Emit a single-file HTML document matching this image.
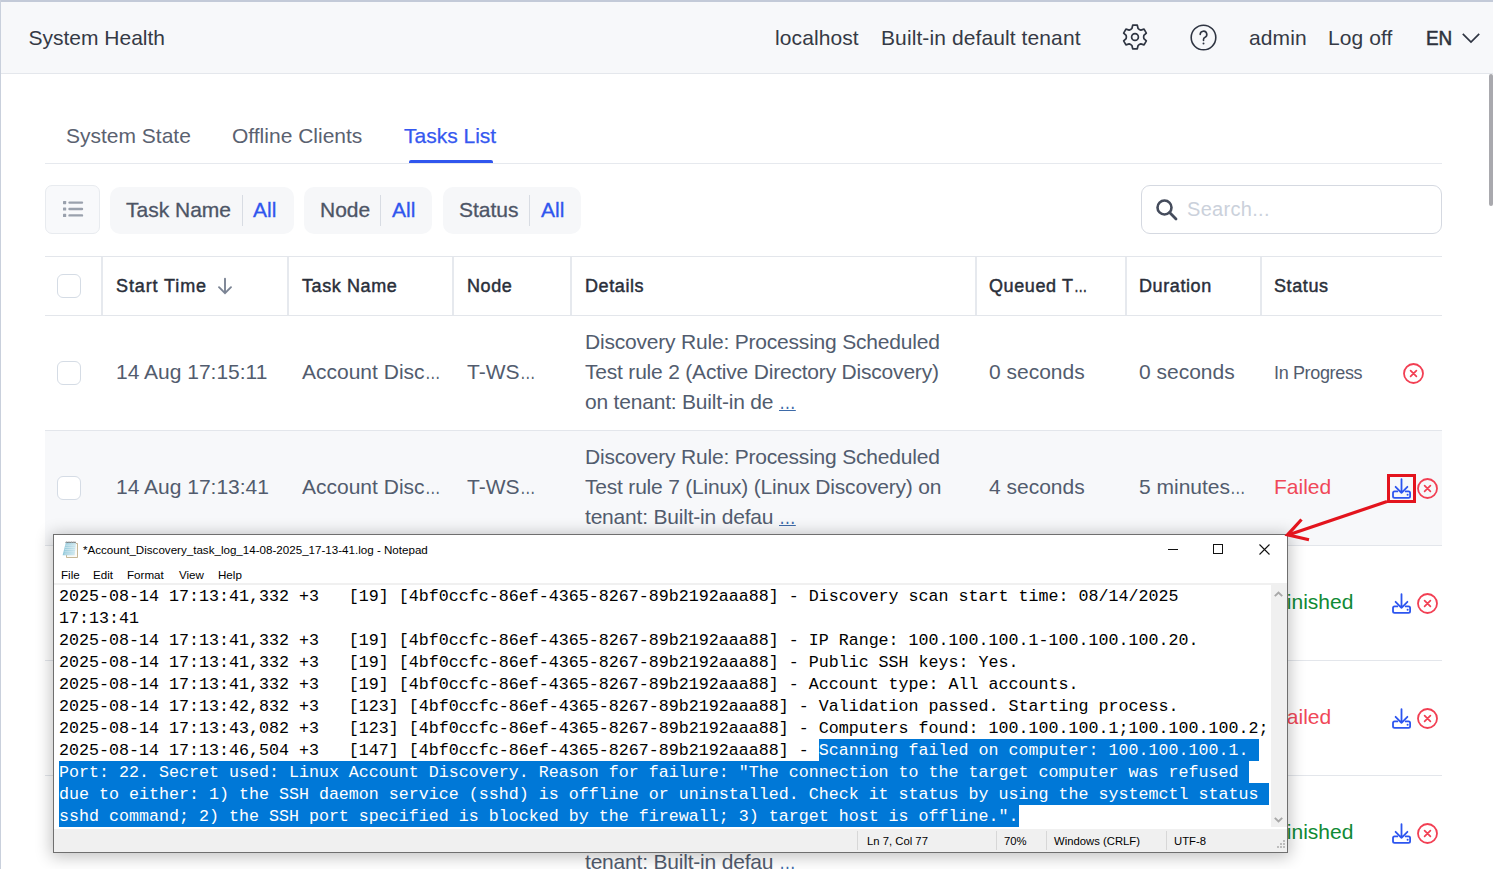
<!DOCTYPE html>
<html><head><meta charset="utf-8"><style>
*{box-sizing:border-box;margin:0;padding:0}
html,body{width:1493px;height:869px;overflow:hidden;background:#fff;font-family:"Liberation Sans",sans-serif;color:#2f3542}
.abs{position:absolute;white-space:nowrap}
#topline{position:absolute;left:0;top:0;width:1493px;height:2px;background:#c3cad8}
#leftline{position:absolute;left:0;top:0;width:1px;height:869px;background:#c9d0dc}
#header{position:absolute;left:1px;top:2px;width:1492px;height:72px;background:#f7f8fa;border-bottom:1px solid #e4e7ec}
.hd{font-size:21px;color:#353a45;letter-spacing:0.1px}
.tab{font-size:21px;color:#5a6170;letter-spacing:0}
.chip{position:absolute;top:187px;height:47px;background:#f6f7f9;border-radius:10px}
.chip .l{position:absolute;top:11px;font-size:21px;color:#4d5566;-webkit-text-stroke:0.3px #4d5566;letter-spacing:0;white-space:nowrap}
.chip .a{position:absolute;top:11px;font-size:21px;color:#3056ee;-webkit-text-stroke:0.3px #3056ee;letter-spacing:0}
.chip .s{position:absolute;top:8px;width:1px;height:31px;background:#d8dce3}
.th{position:absolute;top:276px;font-size:18px;color:#2a2f3a;letter-spacing:0.6px;-webkit-text-stroke:0.45px #2a2f3a;white-space:nowrap}
.vsep{position:absolute;top:257px;width:2px;height:58px;background:#e6e9ee}
.hline{position:absolute;left:45px;width:1397px;height:1px;background:#e3e6eb}
.cb{position:absolute;left:57px;width:24px;height:24px;border:1px solid #d5dce5;border-radius:6px;background:#fff}
.td{position:absolute;font-size:21px;color:#525c6e;letter-spacing:0;white-space:nowrap}
.det{position:absolute;left:585px;font-size:21px;color:#525c6e;line-height:30px;white-space:nowrap;letter-spacing:-0.2px}
.det u{color:#3d6aa8;letter-spacing:0}
.lk{text-decoration-thickness:1.3px;text-underline-offset:1px;display:inline-block;transform:scaleX(0.8);transform-origin:0 0}
.dl,.cx,.ic{position:absolute}
.el{display:inline-block;transform:scaleX(0.74);transform-origin:0 0;letter-spacing:0}
.inprog{font-size:18px;letter-spacing:-0.35px}
.failed{color:#f04858}
.fin{color:#0f8a35}
#np{position:absolute;left:53px;top:534px;width:1235px;height:319px;background:#fff;border:1px solid #6f6f6f;box-shadow:0 2px 15px 2px rgba(0,0,0,0.24)}
.np-title{position:absolute;left:29px;top:8px;font-size:11.6px;color:#000;white-space:nowrap}
.np-min{position:absolute;left:1114px;top:14px;width:10px;height:1px;background:#111}
.np-max{position:absolute;left:1159px;top:9px;width:10px;height:10px;border:1px solid #111}
.np-menu span{position:absolute;top:32.5px;font-size:11.6px;color:#000;white-space:nowrap}
.np-sepline{position:absolute;left:0;top:48px;width:1233px;height:2px;background:#f0f0f0}
.np-text{position:absolute;left:5px;top:51px;width:1212px;font-family:"Liberation Mono",monospace;font-size:16.666px;line-height:22px;color:#000;white-space:pre}
.ln{height:22px}
.sel{color:#fff}
.hl{position:absolute;background:#0078d7}
.np-sb{position:absolute;left:1217px;top:50px;width:16px;height:242px;background:#f0f0f0}
.np-status{position:absolute;left:0;top:294px;width:1233px;height:23px;background:#f0f0f0}
.np-status span{position:absolute;top:6px;font-size:11.3px;color:#000;white-space:nowrap}
.np-ssep{position:absolute;top:2px;width:1px;height:19px;background:#d7d7d7}
</style></head><body>
<div id="header"></div><div id="topline"></div><div id="leftline"></div>
<div class="abs hd" style="left:28.5px;top:26px;letter-spacing:0">System Health</div>
<div class="abs hd" style="left:775px;top:26px">localhost</div>
<div class="abs hd" style="left:881px;top:26px">Built-in default tenant</div>
<div class="abs hd" style="left:1249px;top:26px">admin</div>
<div class="abs hd" style="left:1328px;top:26px">Log off</div>
<div class="abs hd" style="left:1426px;top:25.5px;letter-spacing:0;-webkit-text-stroke:0.55px #2d323d;color:#2d323d;transform:scaleX(0.9);transform-origin:0 0">EN</div>
<div class="abs tab" style="left:66px;top:123.8px">System State</div>
<div class="abs tab" style="left:232px;top:123.8px">Offline Clients</div>
<div class="abs tab" style="left:404px;top:123.8px;color:#3558f0;-webkit-text-stroke:0.25px #3558f0">Tasks List</div>
<div style="position:absolute;left:45px;top:163px;width:1397px;height:1px;background:#e6e9ee"></div>
<div style="position:absolute;left:409px;top:160px;width:84px;height:3px;background:#3056ee;border-radius:2px 2px 0 0"></div>
<div style="position:absolute;left:45px;top:185px;width:55px;height:49px;border:1px solid #e8ebef;border-radius:7px;background:#f8f9fb"></div>
<div class="chip" style="left:110px;width:184px"><span class="l" style="left:16px">Task Name</span><span class="s" style="left:132px"></span><span class="a" style="left:143px">All</span></div>
<div class="chip" style="left:304px;width:128px"><span class="l" style="left:16px">Node</span><span class="s" style="left:76px"></span><span class="a" style="left:88px">All</span></div>
<div class="chip" style="left:443px;width:138px"><span class="l" style="left:16px">Status</span><span class="s" style="left:86px"></span><span class="a" style="left:98px">All</span></div>
<div style="position:absolute;left:1141px;top:185px;width:301px;height:49px;border:1px solid #d5d9e1;border-radius:9px;background:#fff"></div>
<div class="abs" style="left:1187px;top:198px;font-size:20px;color:#cbd1db;letter-spacing:0.3px">Search...</div>
<div class="hline" style="top:256px"></div><div class="hline" style="top:315px"></div>
<div class="cb" style="top:274px"></div>
<div class="vsep" style="left:101px"></div>
<div class="vsep" style="left:287px"></div>
<div class="vsep" style="left:452px"></div>
<div class="vsep" style="left:570px"></div>
<div class="vsep" style="left:975px"></div>
<div class="vsep" style="left:1125px"></div>
<div class="vsep" style="left:1260px"></div>
<div class="th" style="left:116px;letter-spacing:0.9px">Start Time</div>
<div class="th" style="left:302px">Task Name</div>
<div class="th" style="left:467px">Node</div>
<div class="th" style="left:585px">Details</div>
<div class="th" style="left:989px">Queued T<span class="el">…</span></div>
<div class="th" style="left:1139px">Duration</div>
<div class="th" style="left:1274px">Status</div>
<div style="position:absolute;left:45px;top:431px;width:1397px;height:114px;background:#f7f8fa"></div>
<div class="hline" style="top:430px"></div>
<div class="hline" style="top:545px"></div>
<div class="hline" style="top:660px"></div>
<div class="hline" style="top:775px"></div>
<div class="cb" style="top:361px"></div><div class="td" style="left:116px;top:360px">14 Aug 17:15:11</div><div class="td" style="left:302px;top:360px">Account Disc<span class="el">…</span></div><div class="td" style="left:467px;top:360px">T-WS<span class="el">…</span></div><div class="det" style="top:327.4px">Discovery Rule: Processing Scheduled<br>Test rule 2 (Active Directory Discovery)<br>on tenant: Built-in de <u class="lk">…</u></div><div class="td" style="left:989px;top:360px">0 seconds</div><div class="td" style="left:1139px;top:360px">0 seconds</div><div class="td inprog" style="left:1274px;top:362.5px">In Progress</div><svg class="cx" style="left:1402px;top:362px" width="23" height="23" viewBox="0 0 23 23"><circle cx="11.5" cy="11.5" r="9.5" fill="none" stroke="#f23f53" stroke-width="1.8"/><path d="M8.6 8.6l5.8 5.8M14.4 8.6l-5.8 5.8" stroke="#f23f53" stroke-width="1.7" stroke-linecap="round"/></svg>
<div class="cb" style="top:476px"></div><div class="td" style="left:116px;top:475px">14 Aug 17:13:41</div><div class="td" style="left:302px;top:475px">Account Disc<span class="el">…</span></div><div class="td" style="left:467px;top:475px">T-WS<span class="el">…</span></div><div class="det" style="top:442.4px">Discovery Rule: Processing Scheduled<br>Test rule 7 (Linux) (Linux Discovery) on<br>tenant: Built-in defau <u class="lk">…</u></div><div class="td" style="left:989px;top:475px">4 seconds</div><div class="td" style="left:1139px;top:475px">5 minutes<span class="el">…</span></div><div class="td failed" style="left:1274px;top:475px">Failed</div><svg class="dl" style="left:1390px;top:475px" width="24" height="24" viewBox="0 0 24 24"><path d="M11.5 4.2v13.6M5.6 11.8l5.9 6 5.9-6M7.3 16.4H4.6a1.6 1.6 0 0 0-1.6 1.6v3.3a1.6 1.6 0 0 0 1.6 1.6h13.9a1.6 1.6 0 0 0 1.6-1.6v-3.3a1.6 1.6 0 0 0-1.6-1.6h-2.8" fill="none" stroke="#2c55ef" stroke-width="1.8" stroke-linecap="round" stroke-linejoin="round"/><circle cx="17.6" cy="19.8" r="1" fill="#2c55ef"/></svg><svg class="cx" style="left:1416px;top:477px" width="23" height="23" viewBox="0 0 23 23"><circle cx="11.5" cy="11.5" r="9.5" fill="none" stroke="#f23f53" stroke-width="1.8"/><path d="M8.6 8.6l5.8 5.8M14.4 8.6l-5.8 5.8" stroke="#f23f53" stroke-width="1.7" stroke-linecap="round"/></svg>
<div class="cb" style="top:591px"></div><div class="td" style="left:116px;top:590px">14 Aug 17:08:11</div><div class="td" style="left:302px;top:590px">Account Disc<span class="el">…</span></div><div class="td" style="left:467px;top:590px">T-WS<span class="el">…</span></div><div class="det" style="top:557.4px">Discovery Rule: Processing Scheduled<br>Test rule 2 (Active Directory Discovery)<br>on tenant: Built-in de <u class="lk">…</u></div><div class="td" style="left:989px;top:590px">0 seconds</div><div class="td" style="left:1139px;top:590px">3 seconds</div><div class="td fin" style="left:1274px;top:590px">Finished</div><svg class="dl" style="left:1390px;top:590px" width="24" height="24" viewBox="0 0 24 24"><path d="M11.5 4.2v13.6M5.6 11.8l5.9 6 5.9-6M7.3 16.4H4.6a1.6 1.6 0 0 0-1.6 1.6v3.3a1.6 1.6 0 0 0 1.6 1.6h13.9a1.6 1.6 0 0 0 1.6-1.6v-3.3a1.6 1.6 0 0 0-1.6-1.6h-2.8" fill="none" stroke="#2c55ef" stroke-width="1.8" stroke-linecap="round" stroke-linejoin="round"/><circle cx="17.6" cy="19.8" r="1" fill="#2c55ef"/></svg><svg class="cx" style="left:1416px;top:592px" width="23" height="23" viewBox="0 0 23 23"><circle cx="11.5" cy="11.5" r="9.5" fill="none" stroke="#f23f53" stroke-width="1.8"/><path d="M8.6 8.6l5.8 5.8M14.4 8.6l-5.8 5.8" stroke="#f23f53" stroke-width="1.7" stroke-linecap="round"/></svg>
<div class="cb" style="top:706px"></div><div class="td" style="left:116px;top:705px">14 Aug 17:07:40</div><div class="td" style="left:302px;top:705px">Account Disc<span class="el">…</span></div><div class="td" style="left:467px;top:705px">T-WS<span class="el">…</span></div><div class="det" style="top:672.4px">Discovery Rule: Processing Scheduled<br>Test rule 7 (Linux) (Linux Discovery) on<br>tenant: Built-in defau <u class="lk">…</u></div><div class="td" style="left:989px;top:705px">4 seconds</div><div class="td" style="left:1139px;top:705px">5 minutes<span class="el">…</span></div><div class="td failed" style="left:1274px;top:705px">Failed</div><svg class="dl" style="left:1390px;top:705px" width="24" height="24" viewBox="0 0 24 24"><path d="M11.5 4.2v13.6M5.6 11.8l5.9 6 5.9-6M7.3 16.4H4.6a1.6 1.6 0 0 0-1.6 1.6v3.3a1.6 1.6 0 0 0 1.6 1.6h13.9a1.6 1.6 0 0 0 1.6-1.6v-3.3a1.6 1.6 0 0 0-1.6-1.6h-2.8" fill="none" stroke="#2c55ef" stroke-width="1.8" stroke-linecap="round" stroke-linejoin="round"/><circle cx="17.6" cy="19.8" r="1" fill="#2c55ef"/></svg><svg class="cx" style="left:1416px;top:707px" width="23" height="23" viewBox="0 0 23 23"><circle cx="11.5" cy="11.5" r="9.5" fill="none" stroke="#f23f53" stroke-width="1.8"/><path d="M8.6 8.6l5.8 5.8M14.4 8.6l-5.8 5.8" stroke="#f23f53" stroke-width="1.7" stroke-linecap="round"/></svg>
<div class="cb" style="top:821px"></div><div class="td" style="left:116px;top:820px">14 Aug 17:05:11</div><div class="td" style="left:302px;top:820px">Account Disc<span class="el">…</span></div><div class="td" style="left:467px;top:820px">T-WS<span class="el">…</span></div><div class="det" style="top:787.4px">Discovery Rule: Processing Scheduled<br>Test rule 7 (Linux) (Linux Discovery) on<br>tenant: Built-in defau <u class="lk">…</u></div><div class="td" style="left:989px;top:820px">0 seconds</div><div class="td" style="left:1139px;top:820px">4 seconds</div><div class="td fin" style="left:1274px;top:820px">Finished</div><svg class="dl" style="left:1390px;top:820px" width="24" height="24" viewBox="0 0 24 24"><path d="M11.5 4.2v13.6M5.6 11.8l5.9 6 5.9-6M7.3 16.4H4.6a1.6 1.6 0 0 0-1.6 1.6v3.3a1.6 1.6 0 0 0 1.6 1.6h13.9a1.6 1.6 0 0 0 1.6-1.6v-3.3a1.6 1.6 0 0 0-1.6-1.6h-2.8" fill="none" stroke="#2c55ef" stroke-width="1.8" stroke-linecap="round" stroke-linejoin="round"/><circle cx="17.6" cy="19.8" r="1" fill="#2c55ef"/></svg><svg class="cx" style="left:1416px;top:822px" width="23" height="23" viewBox="0 0 23 23"><circle cx="11.5" cy="11.5" r="9.5" fill="none" stroke="#f23f53" stroke-width="1.8"/><path d="M8.6 8.6l5.8 5.8M14.4 8.6l-5.8 5.8" stroke="#f23f53" stroke-width="1.7" stroke-linecap="round"/></svg>
<svg class="ic" style="left:1121px;top:23px" width="28" height="28" viewBox="0 0 28 28"><path d="M10.92 5.54 L11.71 2.22 L16.29 2.22 L17.08 5.54 A5.50 5.50 0 0 0 19.79 7.11 L23.06 6.13 L25.35 10.09 L22.86 12.44 A5.50 5.50 0 0 0 22.86 15.56 L25.35 17.91 L23.06 21.87 L19.79 20.89 A5.50 5.50 0 0 0 17.08 22.46 L16.29 25.78 L11.71 25.78 L10.92 22.46 A5.50 5.50 0 0 0 8.21 20.89 L4.94 21.87 L2.65 17.91 L5.14 15.56 A5.50 5.50 0 0 0 5.14 12.44 L2.65 10.09 L4.94 6.13 L8.21 7.11 A5.50 5.50 0 0 0 10.92 5.54Z" fill="none" stroke="#2f3542" stroke-width="1.7" stroke-linejoin="round"/><circle cx="14" cy="14" r="3.4" fill="none" stroke="#2f3542" stroke-width="1.7"/></svg>
<svg class="ic" style="left:1189px;top:23px" width="29" height="29" viewBox="0 0 29 29"><circle cx="14.5" cy="14.5" r="12.3" fill="none" stroke="#2f3542" stroke-width="1.6"/><path d="M11.2 11.5a3.3 3.3 0 1 1 4.6 3c-.9.4-1.3 1-1.3 2v.9" fill="none" stroke="#2f3542" stroke-width="1.6" stroke-linecap="round"/><circle cx="14.5" cy="20.6" r="1" fill="#2f3542"/></svg>
<svg class="ic" style="left:1461px;top:32.3px" width="20" height="12" viewBox="0 0 20 12"><path d="M1.8 1.8l8.2 8.2 8.2-8.2" fill="none" stroke="#2f3542" stroke-width="1.7"/></svg>
<svg class="ic" style="left:61px;top:198px" width="23" height="22" viewBox="0 0 23 22"><g fill="#9aa1ad"><rect x="2" y="3" width="3.2" height="3.2" rx=".6"/><rect x="2" y="9.4" width="3.2" height="3.2" rx=".6"/><rect x="2" y="15.8" width="3.2" height="3.2" rx=".6"/></g><path d="M8.5 4.6h12.5M8.5 11h12.5M8.5 17.4h12.5" stroke="#9aa1ad" stroke-width="2.4" stroke-linecap="round"/></svg>
<svg class="ic" style="left:1154px;top:197px" width="26" height="26" viewBox="0 0 26 26"><circle cx="10.5" cy="10.5" r="7" fill="none" stroke="#454c5c" stroke-width="2.6"/><path d="M15.6 15.6l6.4 6.4" stroke="#454c5c" stroke-width="2.8" stroke-linecap="round"/></svg>
<svg class="ic" style="left:216px;top:277px" width="18" height="18" viewBox="0 0 18 18"><path d="M9 1.8v14M3 10.2l6 6 6-6" fill="none" stroke="#7b8494" stroke-width="1.9" stroke-linecap="round"/></svg>
<div style="position:absolute;left:1489px;top:74px;width:4px;height:132px;background:#a9a9ae;border-radius:2px"></div>
<div id="np">
<svg style="position:absolute;left:8px;top:6px" width="17" height="17" viewBox="0 0 17 17"><defs><linearGradient id="npg" x1="0" y1="0" x2="1" y2="0"><stop offset="0" stop-color="#8cc5d8"/><stop offset="1" stop-color="#cfe8ef"/></linearGradient></defs><path d="M4.5 2.5h11v14h-11z" fill="#fbfaf6" stroke="#b8a47c" stroke-width="0.8"/><path d="M3.8 1.6h10.2l-1.4 12.6H0.6z" fill="url(#npg)"/><path d="M3.4 4.2h10.3M3.1 6.4h10.4M2.8 8.6h10.4M2.5 10.8h10.4M2.2 13h10.4" stroke="#e6f4f8" stroke-width="0.7" opacity="0.8"/><path d="M3.6 2l.85-1.3.85 1.3.85-1.3.85 1.3.85-1.3.85 1.3.85-1.3.85 1.3.85-1.3.85 1.3.85-1.3.85 1.3" fill="none" stroke="#444" stroke-width="0.55"/></svg>
<div class="np-title">*Account_Discovery_task_log_14-08-2025_17-13-41.log - Notepad</div>
<div class="np-min"></div><div class="np-max"></div>
<svg style="position:absolute;left:1205px;top:9px" width="11" height="11" viewBox="0 0 11 11"><path d="M0.5 0.5l10 10M10.5 0.5l-10 10" stroke="#111" stroke-width="1.1"/></svg>
<div class="np-menu"><span style="left:7px">File</span><span style="left:39px">Edit</span><span style="left:73px">Format</span><span style="left:125px">View</span><span style="left:164px">Help</span></div>
<div class="np-sepline"></div>
<div class="hl" style="left:765px;top:204px;width:440px;height:22px"></div><div class="hl" style="left:5px;top:226px;width:1190px;height:22px"></div><div class="hl" style="left:5px;top:248px;width:1210px;height:22px"></div><div class="hl" style="left:5px;top:270px;width:960px;height:22px"></div><div class="np-text"><div class="ln">2025-08-14 17:13:41,332 +3   [19] [4bf0ccfc-86ef-4365-8267-89b2192aaa88] - Discovery scan start time: 08/14/2025</div><div class="ln">17:13:41</div><div class="ln">2025-08-14 17:13:41,332 +3   [19] [4bf0ccfc-86ef-4365-8267-89b2192aaa88] - IP Range: 100.100.100.1-100.100.100.20.</div><div class="ln">2025-08-14 17:13:41,332 +3   [19] [4bf0ccfc-86ef-4365-8267-89b2192aaa88] - Public SSH keys: Yes.</div><div class="ln">2025-08-14 17:13:41,332 +3   [19] [4bf0ccfc-86ef-4365-8267-89b2192aaa88] - Account type: All accounts.</div><div class="ln">2025-08-14 17:13:42,832 +3   [123] [4bf0ccfc-86ef-4365-8267-89b2192aaa88] - Validation passed. Starting process.</div><div class="ln">2025-08-14 17:13:43,082 +3   [123] [4bf0ccfc-86ef-4365-8267-89b2192aaa88] - Computers found: 100.100.100.1;100.100.100.2;</div><div class="ln">2025-08-14 17:13:46,504 +3   [147] [4bf0ccfc-86ef-4365-8267-89b2192aaa88] - <span class="sel">Scanning failed on computer: 100.100.100.1. </span></div><div class="ln"><span class="sel">Port: 22. Secret used: Linux Account Discovery. Reason for failure: "The connection to the target computer was refused </span></div><div class="ln"><span class="sel">due to either: 1) the SSH daemon service (sshd) is offline or uninstalled. Check it status by using the systemctl status </span></div><div class="ln"><span class="sel">sshd command; 2) the SSH port specified is blocked by the firewall; 3) target host is offline.".</span></div></div>
<div class="np-sb"><svg style="position:absolute;left:3px;top:6px" width="9" height="6" viewBox="0 0 9 6"><path d="M0.8 5.2l3.7-3.7 3.7 3.7" fill="none" stroke="#a8a8a8" stroke-width="1.9"/></svg><svg style="position:absolute;left:3px;top:232px" width="9" height="6" viewBox="0 0 9 6"><path d="M0.8 0.8l3.7 3.7 3.7-3.7" fill="none" stroke="#a8a8a8" stroke-width="1.9"/></svg></div>
<div class="np-status"><div class="np-ssep" style="left:803px"></div><div class="np-ssep" style="left:942px"></div><div class="np-ssep" style="left:992px"></div><div class="np-ssep" style="left:1112px"></div>
<span style="left:813px">Ln 7, Col 77</span><span style="left:950px">70%</span><span style="left:1000px">Windows (CRLF)</span><span style="left:1120px">UTF-8</span><svg style="position:absolute;left:1221px;top:11px" width="11" height="11" viewBox="0 0 11 11"><g fill="#bdbdbd"><rect x="8" y="0" width="2" height="2"/><rect x="5" y="3" width="2" height="2"/><rect x="8" y="3" width="2" height="2"/><rect x="2" y="6" width="2" height="2"/><rect x="5" y="6" width="2" height="2"/><rect x="8" y="6" width="2" height="2"/></g></svg></div>
</div>
<div style="position:absolute;left:1387px;top:474px;width:29px;height:29px;border:3px solid #e3141d"></div>
<svg style="position:absolute;left:0;top:0" width="1493" height="869"><g stroke="#e3141d" stroke-width="3.2" fill="none"><path d="M1387 501.5L1288 535"/><path d="M1301.5 519.5L1287.5 534.8L1309 539.8"/></g></svg>
</body></html>
